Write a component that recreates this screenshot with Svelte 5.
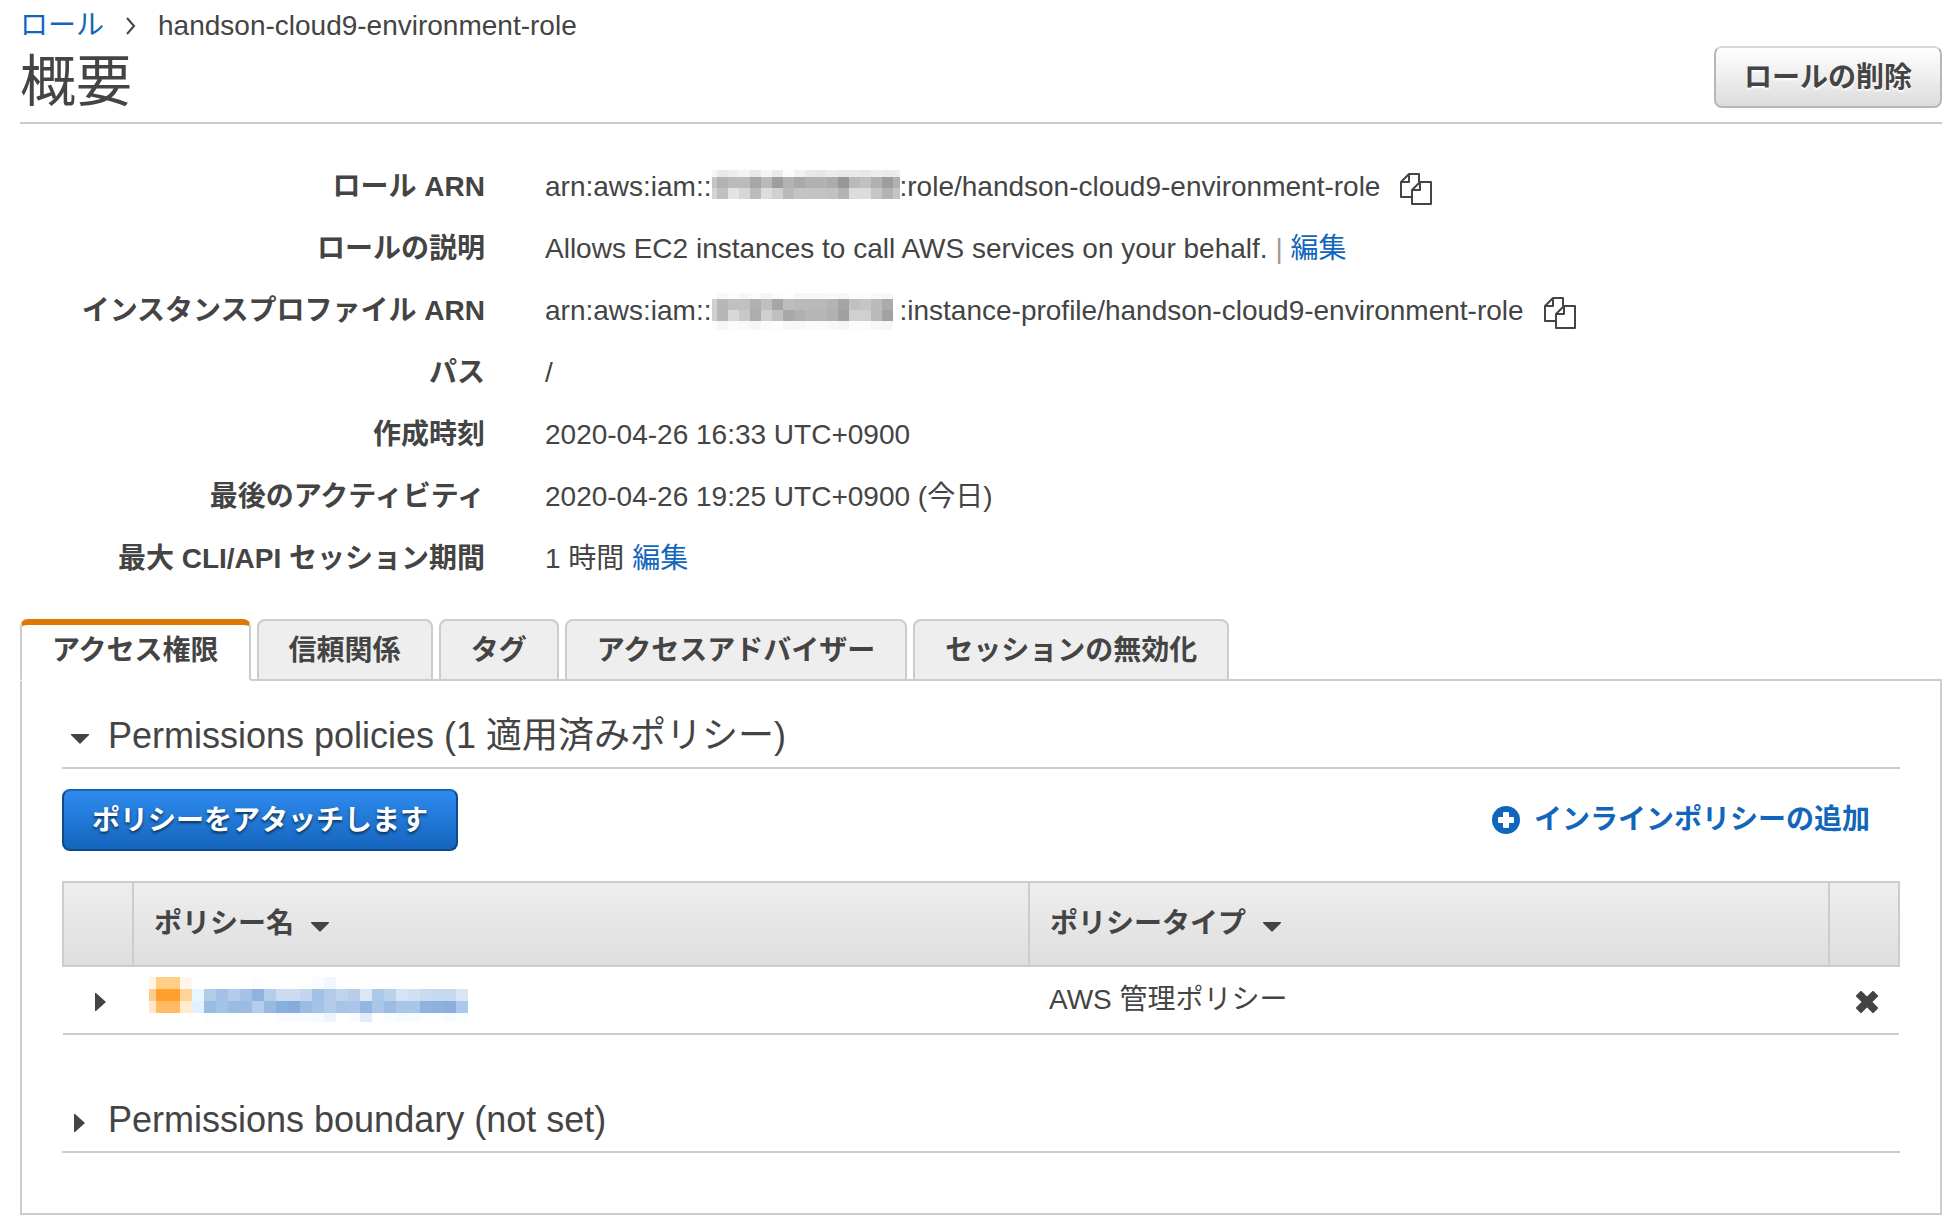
<script>
	const ink = '#444'

	const greys = list => list.split(' ').map(v => `#${v}${v}${v}`)

	const roleAccount = [
		{ y: 2, height: 7, colors: greys('f6 e9 ee f3 e9 f5 ea fc f2 e9 e7 ec e9 e9 e7 ee eb ec') },
		{ y: 9, height: 11, colors: greys('c4 b2 bb bb a6 b9 9e b3 a9 b1 b2 ac 97 b9 c0 b1 9d b1') },
		{ y: 20, height: 11, colors: greys('d4 c0 e3 d7 bb dd d0 b9 c4 c3 c3 c1 b3 dc dc c5 b3 c4') }
	]

	const profileAccount = [
		{ y: 1, height: 6, colors: greys('ff f9 fc f7 fb f5 fb fe f7 f7 f7 fa f6 fc fb f8 f7') },
		{ y: 7, height: 11, colors: greys('d0 b7 c0 c0 b0 bf a6 bd b9 b9 b9 b3 a5 c0 c5 bb ab') },
		{ y: 18, height: 11, colors: greys('d0 b7 d8 c8 ad d0 c0 a9 b0 b6 b6 b1 a0 d0 d0 b9 a2') },
		{ y: 29, height: 9, colors: greys('fd f6 fc fa f6 fb fd f8 f8 fb fa f8 f6 fd fc f8 f6') }
	]

	const nameTop = ['#fff', '#fff', '#fff', '#fff', '#fbfdff', '#fff', '#fff', '#fff', '#fff', '#fafcff', '#f2f6fe', '#fff', '#fff', '#fff', '#fff', '#fff', '#fff', '#fff', '#fff', '#fff', '#fff', '#fff']
	const nameMid = ['#b2cbe8', '#a1c1e6', '#b3cce9', '#a3c2e7', '#8eb3e0', '#b3cdea', '#cbdcf2', '#cbdcf2', '#c3d6ef', '#a1c1e6', '#b1cbe9', '#bfd3ee', '#b8cdea', '#dce6f5', '#adc9ea', '#b8d2ec', '#d7e3f5', '#d0dff3', '#c7daf0', '#c5d9ee', '#c5d9ee', '#d9e5f4']
	const nameLow = ['#9bbce2', '#a3c2e7', '#9abbe2', '#9abbe2', '#b3cdea', '#99b9e2', '#87b0de', '#85acdc', '#9abbe2', '#a4c2e6', '#b1cbe9', '#a7c4e6', '#a9c5e8', '#92b7e2', '#a9c6ea', '#9bbbe4', '#a8c6e6', '#a8c6e6', '#8fb2e0', '#8db0de', '#8baedc', '#abc7ea']
	const nameEnd = ['#fcfdff', '#fcfdff', '#fcfdff', '#fff', '#fff', '#fff', '#f8fbff', '#f8fbff', '#f8fbff', '#f6f9fe', '#eef4fc', '#fff', '#f8fbff', '#e2edf9', '#fff', '#fafcff', '#f7fafe', '#f8fbff', '#fcfdff', '#fcfdff', '#f8fbff', '#fcfdff']

	const tabs = ['アクセス権限', '信頼関係', 'タグ', 'アクセスアドバイザー', 'セッションの無効化']

	let active = $state(0)
	let policiesOpen = $state(true)
	let boundaryOpen = $state(false)
</script>

{#snippet caret(open)}
	<svg class="caret" width="18" height="18" viewBox="0 0 18 18" fill={ink} aria-hidden="true">
		{#if open}
			<path d="M0 4h18v1L9 14 0 5z" />
		{:else}
			<path d="M3 0h1l10 9-10 9H3z" />
		{/if}
	</svg>
{/snippet}

{#snippet cells(colors, x, y, width, height)}
	{#each colors as color, i}
		<rect x={x + i * width} {y} {width} {height} fill={color} />
	{/each}
{/snippet}

{#snippet account(rows)}
	<svg width="188" height="38" viewBox="0 0 188 38" shape-rendering="crispEdges" aria-hidden="true">
		{#each rows as row}
			{@render cells(row.colors, -6, row.y, 11, row.height)}
		{/each}
	</svg>
{/snippet}

{#snippet copy()}
	<button class="icon-button copy" aria-label="コピー">
		<svg width="32" height="32" viewBox="0 0 32 32" fill="none" stroke={ink} stroke-width="2" stroke-linejoin="round" aria-hidden="true">
			<path d="M11 24H1V9l8-8h10v8" />
			<path d="M9 1v8H1" />
			<path d="M12 17l8-8h11v22H12z" />
			<path d="M20 9v8h-8" />
		</svg>
	</button>
{/snippet}

<div class="page">
	<header>
		<div class="heading">
			<nav>
				<a href="#roles">ロール</a>
				<svg width="10" height="20" viewBox="0 0 10 20" fill="none" stroke={ink} stroke-width="2" aria-hidden="true">
					<path d="M1 2l7 8-7 8" />
				</svg>
				<span>handson-cloud9-environment-role</span>
			</nav>
			<h1>概要</h1>
		</div>
		<button class="button">ロールの削除</button>
	</header>

	<dl>
		<dt>ロール ARN</dt>
		<dd>arn:aws:iam::{@render account(roleAccount)}:role/handson-cloud9-environment-role{@render copy()}</dd>
		<dt>ロールの説明</dt>
		<dd>Allows EC2 instances to call AWS services on your behalf. <span class="bar">{'| '}</span><a href="#description">編集</a></dd>
		<dt>インスタンスプロファイル ARN</dt>
		<dd>arn:aws:iam::{@render account(profileAccount)}:instance-profile/handson-cloud9-environment-role{@render copy()}</dd>
		<dt>パス</dt>
		<dd>/</dd>
		<dt>作成時刻</dt>
		<dd>2020-04-26 16:33 UTC+0900</dd>
		<dt>最後のアクティビティ</dt>
		<dd>2020-04-26 19:25 UTC+0900 (今日)</dd>
		<dt>最大 CLI/API セッション期間</dt>
		<dd>1 時間 <a href="#session">編集</a></dd>
	</dl>

	<div class="tabs" role="tablist">
		{#each tabs as tab, i}
			<button class="tab" class:active={active === i} role="tab" aria-selected={active === i} onclick={() => active = i}>{tab}</button>
		{/each}
	</div>

	<div class="panel" role="tabpanel">
		<h2>
			<button class="toggle" aria-expanded={policiesOpen} onclick={() => policiesOpen = !policiesOpen}>
				{@render caret(policiesOpen)}Permissions policies (1 適用済みポリシー)
			</button>
		</h2>

		{#if policiesOpen}
			<div class="actions">
				<button class="button primary">ポリシーをアタッチします</button>
				<a class="add" href="#inline">
					<svg width="28" height="28" viewBox="0 0 28 28" aria-hidden="true">
						<circle cx="14" cy="14" r="14" fill="#16b" />
						<path d="M12 6h4q1 0 1 1v4h4q1 0 1 1v4q0 1-1 1h-4v4q0 1-1 1h-4q-1 0-1-1v-4H7q-1 0-1-1v-4q0-1 1-1h4V7q0-1 1-1z" fill="#fff" />
					</svg>
					インラインポリシーの追加
				</a>
			</div>

			<table>
				<thead>
					<tr>
						<th class="narrow"></th>
						<th class="name"><span class="sort">ポリシー名 {@render caret(true)}</span></th>
						<th><span class="sort">ポリシータイプ {@render caret(true)}</span></th>
						<th class="narrow"></th>
					</tr>
				</thead>
				<tbody>
					<tr>
						<td class="center"><button class="icon-button" aria-label="展開">{@render caret(false)}</button></td>
						<td class="policy">
							<svg width="320" height="46" viewBox="0 0 320 46" shape-rendering="crispEdges" aria-hidden="true">
								<path d="M0 0h7v12H0z" fill="#fff5e6" />
								<path d="M7 0h24v12H7z" fill="#ffce87" />
								<path d="M31 0h12v12H31z" fill="#fff6ec" />
								<path d="M0 12h7v12H0z" fill="#ffcb8c" />
								<path d="M7 12h24v12H7z" fill="#ffa12b" />
								<path d="M31 12h12v12H31z" fill="#ffd498" />
								<path d="M0 24h7v12H0z" fill="#ffe6c8" />
								<path d="M7 24h24v12H7z" fill="#ffbc64" />
								<path d="M31 24h12v12H31z" fill="#ffeccf" />
								<path d="M43 12h12v12H43z" fill="#e6f7ff" />
								<path d="M43 24h12v12H43z" fill="#e2f0ff" />
								{@render cells(nameTop, 55, 0, 12, 12)}
								{@render cells(nameMid, 55, 12, 12, 12)}
								{@render cells(nameLow, 55, 24, 12, 12)}
								{@render cells(nameEnd, 55, 36, 12, 9)}
							</svg>
						</td>
						<td>AWS 管理ポリシー</td>
						<td class="center">
							<button class="icon-button" aria-label="デタッチ">
								<svg width="22" height="22" viewBox="0 0 22 22" fill={ink} stroke={ink} stroke-width="2" stroke-linejoin="round" aria-hidden="true">
									<path d="M5 1l6 6 6-6 4 4-6 6 6 6-4 4-6-6-6 6-4-4 6-6-6-6z" />
								</svg>
							</button>
						</td>
					</tr>
				</tbody>
			</table>
		{/if}

		<h2>
			<button class="toggle" aria-expanded={boundaryOpen} onclick={() => boundaryOpen = !boundaryOpen}>
				{@render caret(boundaryOpen)}Permissions boundary (not set)
			</button>
		</h2>
	</div>
</div>


<style>

:global(body) {
	background: #fff;
}

.page {
	padding: 6px 18px 16px 20px;
	font-family: "Liberation Sans", "Noto Sans CJK JP", sans-serif;
	font-size: 28px;
	line-height: 40px;
	color: #444;
}

.page * {
	box-sizing: border-box;
}

button {
	font: inherit;
	color: inherit;
	cursor: pointer;
}

svg {
	flex: none;
}

a {
	color: #16b;
	text-decoration: none;
}

header {
	display: flex;
	justify-content: space-between;
	align-items: flex-end;
	border-bottom: 2px solid #ccc;
}

header .button {
	margin-bottom: 14px;
}

nav {
	display: flex;
	align-items: center;
	gap: 22px;
}

h1 {
	margin: 0;
	padding: 2px 0 6px;
	font-size: 56px;
	font-weight: 400;
	line-height: 68px;
}

.button {
	height: 62px;
	padding: 2px 28px 0;
	border: 2px solid #b7b7b7;
	border-top-color: #d9d9d9;
	border-radius: 8px;
	background: linear-gradient(#fff, #dcdcdc);
	font-weight: 700;
	text-shadow: 0 2px 2px #fff;
}

.primary {
	border-color: #0c4a8c;
	border-top-color: #1a63b4;
	background: linear-gradient(#2e8bef, #1565bd);
	color: #fff;
	text-shadow: 0 2px 3px rgba(0, 0, 0, 0.6);
}

dl {
	display: grid;
	grid-template-columns: 465px 1fr;
	gap: 22px 60px;
	margin: 43px 0 40px;
}

dt {
	font-weight: 700;
	text-align: right;
}

dd {
	display: flex;
	align-items: center;
	height: 40px;
	margin: 0;
	white-space: pre;
}

.bar {
	color: #999;
}

.icon-button {
	display: inline-flex;
	padding: 0;
	border: 0;
	background: none;
}

.copy {
	margin: 4px 0 0 20px;
}

.tabs {
	display: flex;
	gap: 6px;
	position: relative;
	margin-bottom: -2px;
}

.tab {
	height: 62px;
	padding: 2px 30px 0;
	border: 2px solid #ccc;
	border-radius: 8px 8px 0 0;
	background: #eee;
	font-weight: 700;
}

.active {
	padding: 0 30px 2px;
	border-top: 6px solid #e07700;
	border-bottom-color: #fff;
	background: #fff;
}

.panel {
	padding: 32px 40px 60px;
	border: 2px solid #ccc;
}

h2 {
	margin: 0;
	border-bottom: 2px solid #ccc;
	font-size: 36px;
	font-weight: 400;
}

.toggle {
	display: flex;
	align-items: center;
	gap: 19px;
	padding: 1px 9px 9px;
	border: 0;
	background: none;
	line-height: 44px;
}

.toggle .caret {
	margin-top: 6px;
}

.actions {
	display: flex;
	justify-content: space-between;
	align-items: center;
	padding: 20px 30px 30px 0;
}

.add {
	display: flex;
	align-items: center;
	gap: 14px;
	font-weight: 700;
}

table {
	width: 100%;
	margin-bottom: 62px;
	border-collapse: collapse;
	table-layout: fixed;
}

th {
	height: 84px;
	padding: 0 20px;
	border: 2px solid #ccc;
	background: linear-gradient(#eee, #dedede);
	text-align: left;
}

.narrow {
	width: 70px;
}

.name {
	width: 896px;
}

.sort {
	display: flex;
	align-items: center;
	gap: 17px;
}

.sort .caret {
	margin-top: 6px;
}

td {
	height: 68px;
	padding: 0 20px;
	border-bottom: 2px solid #ccc;
}

.center {
	padding: 0 0 0 6px;
	text-align: center;
}

.center .icon-button {
	vertical-align: middle;
}

.policy {
	padding: 0 16px;
}

.policy svg {
	display: block;
}

</style>
